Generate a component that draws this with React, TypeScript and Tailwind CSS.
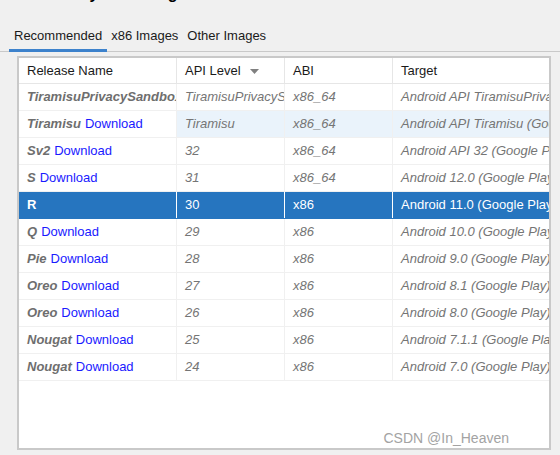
import React from 'react';

type Row = {
  name: string;
  download: boolean;
  api: string;
  abi: string;
  target: string;
};

const rows: Row[] = [
  { name: 'TiramisuPrivacySandbox', download: false, api: 'TiramisuPrivacySandbox', abi: 'x86_64', target: 'Android API TiramisuPrivacySandbox (Google Play)' },
  { name: 'Tiramisu', download: true, api: 'Tiramisu', abi: 'x86_64', target: 'Android API Tiramisu (Google Play)' },
  { name: 'Sv2', download: true, api: '32', abi: 'x86_64', target: 'Android API 32 (Google Play)' },
  { name: 'S', download: true, api: '31', abi: 'x86_64', target: 'Android 12.0 (Google Play)' },
  { name: 'R', download: false, api: '30', abi: 'x86', target: 'Android 11.0 (Google Play)' },
  { name: 'Q', download: true, api: '29', abi: 'x86', target: 'Android 10.0 (Google Play)' },
  { name: 'Pie', download: true, api: '28', abi: 'x86', target: 'Android 9.0 (Google Play)' },
  { name: 'Oreo', download: true, api: '27', abi: 'x86', target: 'Android 8.1 (Google Play)' },
  { name: 'Oreo', download: true, api: '26', abi: 'x86', target: 'Android 8.0 (Google Play)' },
  { name: 'Nougat', download: true, api: '25', abi: 'x86', target: 'Android 7.1.1 (Google Play)' },
  { name: 'Nougat', download: true, api: '24', abi: 'x86', target: 'Android 7.0 (Google Play)' },
];

const font = { fontFamily: '"Liberation Sans", Arial, sans-serif' };

export default function App() {
  return (
    <div
      className="relative h-[455px] w-[560px] overflow-hidden bg-[#f0f0f0] text-[13px] text-[#1a1a1a]"
      style={font}
    >
      {/* Title, scrolled mostly out of view */}
      <div className="-mt-[16px] h-[20px] pl-[14px] text-[16px] font-bold leading-[20px] text-black">
        Select a System Image
      </div>

      {/* Tabs */}
      <div className="mt-[23px] flex h-[25px] items-start border-b border-[#c9c9c9] pl-[9px]">
        <div className="flex h-[25px] flex-col">
          <span className="px-[5px] pt-[1px] leading-[16px]">Recommended</span>
          <div className="mt-auto h-[3px] w-[98px] bg-[#3d82cc]" />
        </div>
        <span className="ml-[4px] pt-[1px] leading-[16px]">x86 Images</span>
        <span className="ml-[9px] pt-[1px] leading-[16px]">Other Images</span>
      </div>

      {/* Table */}
      <div className="ml-[17px] mt-[4px] h-[394px] w-[534px] border-2 border-[#c9c9c9] bg-white">
        <div className="grid h-[26px] grid-cols-[157px_108px_108px_157px] border-b border-[#e6e6e6]">
          <div className="flex items-center px-2">Release Name</div>
          <div className="flex items-center border-l border-[#e6e6e6] px-2">
            API Level
            <svg className="ml-[9px] mt-[1px]" width="9" height="5" viewBox="0 0 9 5">
              <path d="M0 0 H9 L4.5 5 Z" fill="#808080" />
            </svg>
          </div>
          <div className="flex items-center border-l border-[#e6e6e6] px-2">ABI</div>
          <div className="flex items-center border-l border-[#e6e6e6] px-2">Target</div>
        </div>

        {rows.map((r, i) => {
          const sel = r.name === 'R';
          const hover = i === 1;
          const cell = sel
            ? 'bg-[#2675bf] text-white border-[#ffffff]'
            : hover
              ? 'bg-[#eaf3fb] italic text-[#757575] border-[#f0f0f0]'
              : 'italic text-[#757575] border-[#f0f0f0]';
          return (
            <div
              key={i}
              className={`grid h-[27px] grid-cols-[157px_108px_108px_157px] border-b ${sel ? 'border-[#2675bf]' : 'border-[#f0f0f0]'}`}
            >
              <div
                className={`flex items-center overflow-hidden whitespace-nowrap px-2 ${sel ? 'bg-[#2675bf] text-white' : ''}`}
              >
                <span className={`font-bold ${sel ? '' : 'italic text-[#6e6e6e]'}`}>{r.name}</span>
                {r.download && <span className="ml-[4px] text-[#1a1aff]">Download</span>}
              </div>
              <div className={`flex items-center overflow-hidden whitespace-nowrap border-l px-2 ${cell}`}>
                {r.api}
              </div>
              <div className={`flex items-center overflow-hidden whitespace-nowrap border-l px-2 ${cell}`}>
                {r.abi}
              </div>
              <div className={`flex items-center overflow-hidden whitespace-nowrap border-l px-2 ${cell}`}>
                {r.target}
              </div>
            </div>
          );
        })}
      </div>

      {/* Watermark */}
      <div className="absolute bottom-[6px] right-[51px] text-[14px] text-[#a3a3a3]">CSDN @In_Heaven</div>
    </div>
  );
}
